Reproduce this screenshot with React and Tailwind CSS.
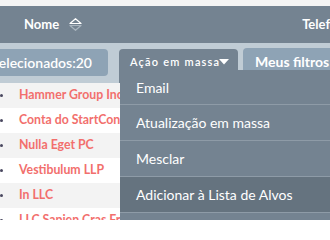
import React from "react";

const rows = [
  "Hammer Group Inc",
  "Conta do StartConsult",
  "Nulla Eget PC",
  "Vestibulum LLP",
  "In LLC",
  "LLC Sapien Cras Fr",
];

const menu = ["Email", "Atualização em massa", "Mesclar", "Adicionar à Lista de Alvos", "Exportar"];

export default function App() {
  return (
    <div
      className="relative w-[330px] h-[220px] overflow-hidden bg-white"
      style={{ fontFamily: "Lato, 'Open Sans', sans-serif" }}
    >
      <div className="h-[6px] bg-[#f4f4f4]" />
      <div className="h-[37px] bg-[#748391] flex items-center text-white font-bold text-[13px] whitespace-nowrap">
        <span className="ml-[24px]">Nome</span>
        <span className="ml-[10px] mt-[-1px] flex flex-col items-center gap-[1px]">
          <svg width="13" height="6" viewBox="0 0 13 6" className="block">
            <path d="M6.5 0.7 L12 5.5 H1 Z" fill="none" stroke="#ffffff" strokeWidth="1.2" strokeLinejoin="round" />
          </svg>
          <svg width="13" height="6" viewBox="0 0 13 6" className="block">
            <path d="M1 0.5 H12 L6.5 5.3 Z" fill="none" stroke="#a9b4be" strokeWidth="1.2" strokeLinejoin="round" />
          </svg>
        </span>
        <span className="ml-[220px]">Telefone</span>
      </div>
      <div className="h-[40px] bg-[#c0ccd5] flex items-start">
        <div className="ml-[-30px] mt-[6px] h-[27px] w-[138px] shrink-0 rounded-[4px] bg-[#8ea3b5] text-white text-[14px] font-semibold flex items-center justify-end pr-[16px] whitespace-nowrap">
          Selecionados:20
        </div>
        <div className="ml-[11px] mt-[6px] h-[34px] w-[119px] shrink-0 rounded-t-[4px] bg-[#748391] text-white text-[11px] font-semibold tracking-[1.2px] flex items-start pt-[5px] pl-[11px] whitespace-nowrap">
          <span>Ação em massa</span>
          <svg width="10" height="6" viewBox="0 0 10 6" className="mt-[5px] ml-[-1px]">
            <path d="M0 0 H10 L5 5.5 Z" fill="#ffffff" />
          </svg>
        </div>
        <div className="ml-[5px] mt-[5px] h-[35px] flex-1 rounded-tl-[4px] bg-[#8ea3b5] text-white text-[14px] font-bold pl-[12px] pt-[3px] whitespace-nowrap">
          Meus filtros
        </div>
      </div>
      <div>
        {rows.map((r, i) => (
          <div
            key={r}
            className={`h-[25px] flex items-center ${i % 2 === 0 ? "bg-[#f3f3f3]" : "bg-white"}`}
          >
            <span className="w-[3px] h-[3px] rounded-full bg-[#4a4860] ml-[0px] shrink-0" />
            <span className="ml-[16px] text-[12.3px] font-bold text-[#f26f6d] whitespace-nowrap">{r}</span>
          </div>
        ))}
      </div>
      <div className="absolute left-[120px] top-[70px] w-[220px] bg-[#748391] text-white text-[14px]">
        {menu.map((m, i) => (
          <div
            key={m}
            className={`flex items-center pl-[16px] border-b border-[#8e9ba7] whitespace-nowrap ${i === 3 ? "bg-[#65737f]" : ""} ${i === 0 ? "h-[35px]" : "h-[36px]"}`}
          >
            {m}
          </div>
        ))}
      </div>
    </div>
  );
}
